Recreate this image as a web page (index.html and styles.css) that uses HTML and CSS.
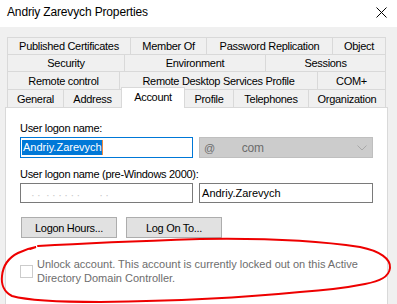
FILE: index.html
```html
<!DOCTYPE html>
<html lang="en">
<head>
    <meta charset="UTF-8">
    <title>Andriy Zarevych Properties</title>
    <link rel="stylesheet" href="styles.css">
</head>
<body>
    <div class="titlebar">
        <span class="title">Andriy Zarevych Properties</span>
        <svg class="close" width="11" height="11" viewBox="0 0 11 11">
            <path d="M0.5 0.5 L10.5 10.5 M10.5 0.5 L0.5 10.5" stroke="#000" stroke-width="1" fill="none"/>
        </svg>
    </div>

    <div class="dialog">
        <div class="tabs">
            <div class="tab-row row1">
                <div class="tab">Published Certificates</div>
                <div class="tab">Member Of</div>
                <div class="tab">Password Replication</div>
                <div class="tab">Object</div>
            </div>
            <div class="tab-row row2">
                <div class="tab">Security</div>
                <div class="tab">Environment</div>
                <div class="tab">Sessions</div>
            </div>
            <div class="tab-row row3">
                <div class="tab">Remote control</div>
                <div class="tab">Remote Desktop Services Profile</div>
                <div class="tab">COM+</div>
            </div>
            <div class="tab-row row4">
                <div class="tab">General</div>
                <div class="tab">Address</div>
                <div class="tab active">Account</div>
                <div class="tab">Profile</div>
                <div class="tab">Telephones</div>
                <div class="tab">Organization</div>
            </div>
        </div>

        <div class="panel">
            <div class="label">User logon name:</div>
            <div class="field-row">
                <div class="input focused"><span class="selected">Andriy.Zarevych</span></div>
                <div class="combo">
                    <span class="at">@</span>
                    <span class="domain">com</span>
                    <svg class="chevron" width="10" height="6" viewBox="0 0 10 6">
                        <polyline points="0.5,0.5 5,5 9.5,0.5" stroke="#a8a8a8" stroke-width="1" fill="none"/>
                    </svg>
                </div>
            </div>

            <div class="label label-second">User logon name (pre-Windows 2000):</div>
            <div class="field-row">
                <div class="input redacted">&middot; &middot;&nbsp; &middot; &middot; &middot; &middot; &middot; &middot;&nbsp;&nbsp;&nbsp;&nbsp;&nbsp;&nbsp; &middot; &middot;</div>
                <div class="input">Andriy.Zarevych</div>
            </div>

            <div class="button-row">
                <button class="button">Logon Hours...</button>
                <button class="button">Log On To...</button>
            </div>

            <div class="check-row">
                <span class="checkbox"></span>
                <span class="check-label">Unlock account. This account is currently locked out on this Active Directory Domain Controller.</span>
            </div>
        </div>
    </div>

    <!-- red marker circle drawn over the dialog -->
    <svg class="scribble" width="397" height="304" viewBox="0 0 397 304">
        <path d="M38 246 C90 243, 140 241, 200 239 C260 238, 320 241, 360 247 C380 251, 391 259, 390 268 C389 277, 380 281, 365 284 C350 287, 330 290, 300 292 C250 297, 180 301, 100 302 C60 302, 30 301, 12 296 C4 292, 1 284, 2 276 C3 266, 8 258, 18 253 C24 250, 30 248, 36 247 L30 249"
              stroke="#ee0000" stroke-width="2" fill="none" stroke-linecap="round"/>
    </svg>
</body>
</html>
```

FILE: styles.css
```css
body {
    margin: 0;
    height: 304px;
    overflow: hidden;
    position: relative;
    background-color: #f0f0f0;
    font-family: "Liberation Sans", Arial, sans-serif;
    font-size: 11px;
    letter-spacing: -0.3px;
    color: #000;
}
.titlebar {
    height: 27px;
    box-sizing: border-box;
    background-color: #fff;
    display: flex;
    justify-content: space-between;
    align-items: flex-start;
    padding: 4px 10px 0 7px;
}
.title {
    font-size: 12px;
    line-height: 16px;
    letter-spacing: -0.15px;
}
.close {
    margin-top: 3px;
}
.dialog {
    padding: 10px 0 0 5px;
}
.tabs {
    margin-left: 2px;
    width: 379px;
}
.tab-row {
    display: grid;
}
.row1 {
    grid-template-columns: 124px 76px 126px 53px;
}
.row2 {
    grid-template-columns: 118px 141px 120px;
}
.row3 {
    grid-template-columns: 113px 198px 68px;
}
.row4 {
    grid-template-columns: 57px 58px 63px 49px 75px 77px;
}
.tab {
    height: 17px;
    box-sizing: border-box;
    background-color: #f0f0f0;
    border-top: 1px solid #d9d9d9;
    border-right: 1px solid #d9d9d9;
    display: flex;
    align-items: center;
    justify-content: center;
    white-space: nowrap;
}
.tab:first-child {
    border-left: 1px solid #d9d9d9;
}
.row3 .tab,
.row4 .tab {
    height: 18px;
}
.row4 .tab.active {
    height: 21px;
    margin: -2px 0 -1px -1px;
    padding-bottom: 3px;
    background-color: #fff;
    border-left: 1px solid #d9d9d9;
    position: relative;
    z-index: 1;
}
.panel {
    width: 383px;
    height: 197px;
    box-sizing: border-box;
    background-color: #fff;
    border: 1px solid #d9d9d9;
    border-bottom: none;
    padding: 13px 14px 0 14px;
}
.label {
    line-height: 14px;
}
.label-second {
    margin-top: 9px;
}
.field-row {
    display: flex;
    gap: 6px;
    margin-top: 2px;
}
.input {
    width: 175px;
    height: 20px;
    box-sizing: border-box;
    border: 1px solid #7a7a7a;
    display: flex;
    align-items: center;
    padding-left: 2px;
    white-space: nowrap;
    letter-spacing: 0;
}
.input + .input {
    width: 176px;
}
.input.focused {
    height: 21px;
    border-color: #0078d7;
    padding-left: 1px;
}
.selected {
    background-color: #0078d7;
    color: #fff;
    line-height: 15px;
    padding: 0 0 0 1px;
    border-right: 1px solid #f08a3c;
}
.redacted {
    color: #c8c8c8;
    padding-left: 10px;
    padding-top: 3px;
    letter-spacing: -0.3px;
}
.combo {
    width: 176px;
    height: 21px;
    box-sizing: border-box;
    background-color: #cccccc;
    border: 1px solid #bfbfbf;
    display: flex;
    align-items: center;
    padding-left: 4px;
    color: #6d6d6d;
}
.domain {
    margin-left: 27px;
    font-size: 12px;
}
.chevron {
    margin-left: auto;
    margin-right: 5px;
}
.button-row {
    display: flex;
    gap: 9px;
    margin: 14px 0 0 1px;
}
.button {
    width: 96px;
    height: 21px;
    background-color: #e1e1e1;
    border: 1px solid #adadad;
    border-radius: 0;
    padding: 0;
    font-family: inherit;
    font-size: 11px;
    letter-spacing: -0.3px;
    color: #000;
}
.check-row {
    display: flex;
    align-items: center;
    gap: 4px;
    margin-top: 19px;
}
.checkbox {
    width: 13px;
    height: 13px;
    box-sizing: border-box;
    border: 1px solid #cccccc;
    flex-shrink: 0;
}
.check-label {
    width: 336px;
    line-height: 14px;
    letter-spacing: 0;
    color: #6d6d6d;
}
.scribble {
    position: absolute;
    top: 0;
    left: 0;
    pointer-events: none;
}
```
